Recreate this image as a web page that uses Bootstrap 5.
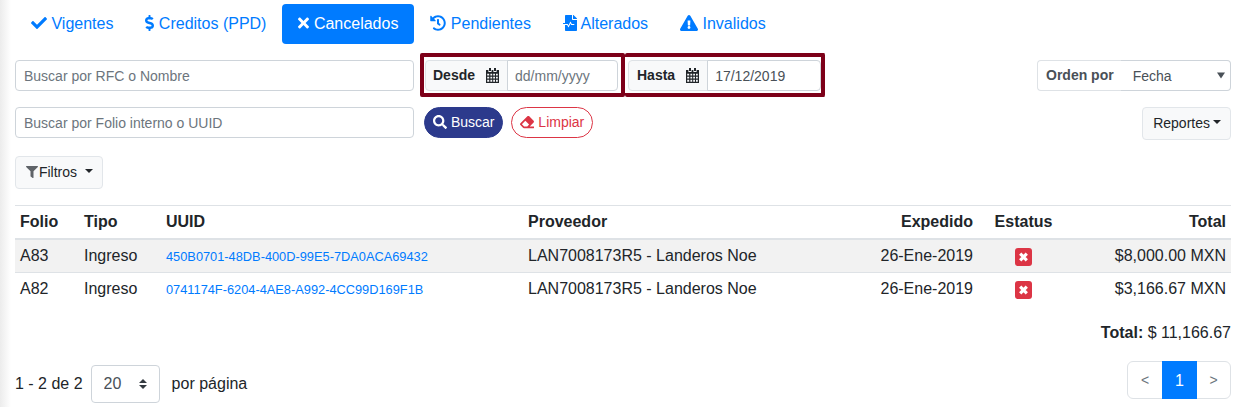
<!DOCTYPE html>
<html lang="es">
<head>
    <meta charset="UTF-8">
    <meta name="viewport" content="width=device-width, initial-scale=1.0">
    <title>Comprobantes cancelados</title>
    <link href="https://cdn.jsdelivr.net/npm/bootstrap@5.3.0/dist/css/bootstrap.min.css" rel="stylesheet">
    <style>
        html, body {
            height: 407px;
            overflow: hidden;
        }
        body {
            font-family: "Liberation Sans", Arial, sans-serif;
            color: #212529;
            background: linear-gradient(to right, #ececec 0, #ffffff 11px) no-repeat;
        }
        .page-wrap {
            padding: 4px 7px 0 15px;
        }
        .ic {
            height: 1em;
            fill: currentColor;
            vertical-align: -.125em;
        }
        /* pestañas */
        .nav-pills .nav-link {
            color: #007bff;
            border-radius: 4px;
        }
        .nav-pills .nav-link.active {
            background-color: #007bff;
            color: #fff;
        }
        /* filtros */
        .row-one {
            margin-top: 9px;
            height: 44px;
        }
        .row-two {
            margin-top: 10px;
        }
        .search-box {
            width: 399px;
            height: 31px;
        }
        .row-one .search-box, .order-box .form-select {
            padding-top: 5px;
            padding-bottom: 3px;
        }
        .form-control, .form-select {
            border-color: #ced4da;
            color: #495057;
            border-radius: 4px;
        }
        .form-control::placeholder {
            color: #6c757d;
        }
        .date-box {
            border: 4px solid #7d0019;
            border-radius: 2px;
            padding: 3px 3px 2px 1px;
            width: 205px;
            margin-left: 6px;
        }
        .date-box.second {
            border-left: 0;
            margin-left: 0;
            width: 200px;
            padding-left: 3px;
            padding-right: 0;
        }
        .date-box .input-group-text, .order-box .input-group-text {
            font-weight: 700;
            font-size: 14px;
            background-color: #f8f9fa;
            padding: 0 8px;
            height: 31px;
        }
        .date-box .input-group-text {
            padding-left: 7px;
        }
        .date-box.second .input-group-text {
            padding-left: 8px;
        }
        .date-box .form-control {
            height: 31px;
            padding-left: 7px;
        }
        .cal-ic {
            width: 13px;
            height: 15px;
            margin-left: 11px;
            color: #212529;
        }
        .order-box {
            width: 194px;
            height: 31px;
        }
        .order-box .input-group-text {
            background: #fff;
            color: #495057;
            border-right: 0;
        }
        .order-box .form-select {
            border-left: 0;
            height: 31px;
            padding-left: 12px;
            background-image: url("data:image/svg+xml,%3csvg xmlns='http://www.w3.org/2000/svg' viewBox='0 0 8 6'%3e%3cpath fill='%23495057' d='M0 0h8L4 6z'/%3e%3c/svg%3e");
            background-size: 8px 7px;
            background-position: right 5px center;
        }
        .btn-search {
            background-color: #2c3a8c;
            border-color: #2c3a8c;
            color: #fff;
            height: 31px;
            padding: 4px 8px;
            margin-left: 10px;
        }
        .btn-clear {
            height: 31px;
            padding: 4px 8px;
            margin-left: 8px;
            background: #fff;
            color: #dc3545;
            border-color: #dc3545;
        }
        .btn-plain {
            background-color: #f8f9fa;
            border-color: #e2e6ea;
            color: #212529;
            height: 33px;
            padding: 5px 9px 5px 10px;
            font-size: 14px;
            border-radius: 4px;
        }
        .btn-plain.dropdown-toggle::after {
            margin-left: 3px;
        }
        .filter-wrap {
            margin-top: 16px;
        }
        .filter-ic {
            height: 12px;
            margin-right: -3px;
            vertical-align: -1px;
            color: #5f6368;
        }
        .btn-plain.toggle-wide::after {
            margin-left: 8px;
        }
        /* tabla */
        .doc-table {
            table-layout: fixed;
            margin: 16px 0 0;
            border-top: 1px solid #dee2e6;
        }
        .doc-table th, .doc-table td {
            padding: 4px 5px;
            border-bottom: 1px solid #dee2e6;
            vertical-align: middle;
        }
        .doc-table thead th {
            border-bottom: 2px solid #dee2e6;
        }
        .doc-table tbody tr:last-child td {
            border-bottom: 0;
        }
        .doc-table td a {
            color: #007bff;
            font-size: 12.8px;
            text-decoration: none;
        }
        .col-folio { width: 64px; }
        .col-tipo { width: 82px; }
        .col-uuid { width: 362px; }
        .col-prov { width: 337px; }
        .col-exp { width: 118px; }
        .col-est { width: 91px; }
        .status-ic {
            width: 17px;
            height: 18px;
            vertical-align: -5px;
        }
        .status-ic rect {
            fill: #dc3545;
        }
        .status-ic path {
            stroke: #fff;
            stroke-width: 3.2;
            fill: none;
        }
        .grand-total {
            margin-top: 16px;
            line-height: 24px;
        }
        /* pie */
        .foot-row {
            margin-top: 16px;
        }
        .per-page {
            margin-top: 4px;
        }
        .per-page .form-select {
            width: 69px;
            height: 38px;
            padding-left: 12px;
            margin: 0 12px 0 8px;
            background-image: url("data:image/svg+xml,%3csvg xmlns='http://www.w3.org/2000/svg' viewBox='0 0 4 5'%3e%3cpath fill='%23343a40' d='M2 0L0 2h4zm0 5L0 3h4z'/%3e%3c/svg%3e");
            background-size: 8px 10px;
            background-position: right 12px center;
        }
        .pagination .page-link {
            width: 35px;
            height: 38px;
            padding: 7px 0;
            text-align: center;
            color: #6c757d;
            border-color: #dee2e6;
        }
        .pagination .page-item:first-child .page-link {
            width: 36px;
        }
        .pagination .active .page-link {
            background-color: #007bff;
            border-color: #007bff;
            color: #fff;
        }
        .pagination .arrow-link {
            font-size: 14px;
            padding-top: 8px;
        }
    </style>
</head>
<body>
    <div class="page-wrap">
        <ul class="nav nav-pills">
            <li class="nav-item">
                <a class="nav-link" href="#"><svg class="ic" viewBox="0 0 512 512"><path d="M173.898 439.404l-166.4-166.4c-9.997-9.997-9.997-26.206 0-36.204l36.203-36.204c9.997-9.998 26.207-9.998 36.204 0L192 312.69 432.095 72.596c9.997-9.997 26.207-9.997 36.204 0l36.203 36.204c9.997 9.997 9.997 26.206 0 36.204l-294.4 294.401c-9.998 9.997-26.207 9.997-36.204-.001z"/></svg> Vigentes</a>
            </li>
            <li class="nav-item">
                <a class="nav-link" href="#"><svg class="ic" viewBox="0 0 288 512"><path d="M209.2 233.4l-108-31.6C88.7 198.2 80 186.5 80 173.5c0-16.3 13.2-29.5 29.5-29.5h66.3c12.2 0 24.2 3.7 34.2 10.5 6.1 4.1 14.3 3.1 19.5-2l34.8-34c7.1-6.9 6.1-18.4-1.8-24.5C238 74.8 207.4 64.1 176 64V16c0-8.8-7.2-16-16-16h-32c-8.8 0-16 7.2-16 16v48h-2.5C45.8 64-5.4 118.7.5 183.6c4.2 46.1 39.4 83.6 83.8 96.6l102.5 30c12.5 3.7 21.2 15.3 21.2 28.3 0 16.3-13.2 29.5-29.5 29.5h-66.3C100 368 88 364.3 78 357.5c-6.1-4.1-14.3-3.1-19.5 2l-34.8 34c-7.1 6.9-6.1 18.4 1.8 24.5 24.5 19.2 55.1 29.9 86.5 30v48c0 8.8 7.2 16 16 16h32c8.8 0 16-7.2 16-16v-48.2c46.6-.9 90.3-28.6 105.7-72.7 21.5-61.6-14.6-124.8-72.5-141.7z"/></svg> Creditos (PPD)</a>
            </li>
            <li class="nav-item">
                <a class="nav-link active" href="#"><svg class="ic" viewBox="0 0 352 512"><path d="M242.72 256l100.07-100.07c12.28-12.28 12.28-32.19 0-44.48l-22.24-22.24c-12.28-12.28-32.19-12.28-44.48 0L176 189.28 75.93 89.21c-12.28-12.28-32.19-12.28-44.48 0L9.21 111.45c-12.28 12.28-12.28 32.19 0 44.48L109.28 256 9.21 356.07c-12.28 12.28-12.28 32.19 0 44.48l22.24 22.24c12.28 12.28 32.2 12.28 44.48 0L176 322.72l100.07 100.07c12.28 12.28 32.2 12.28 44.48 0l22.24-22.24c12.28-12.28 12.28-32.19 0-44.48L242.72 256z"/></svg> Cancelados</a>
            </li>
            <li class="nav-item">
                <a class="nav-link" href="#"><svg class="ic" viewBox="0 0 512 512"><path d="M504 255.531c.253 136.64-111.18 248.372-247.82 248.468-59.015.042-113.223-20.53-155.822-54.911-11.077-8.94-11.905-25.541-1.839-35.607l11.267-11.267c8.609-8.609 22.353-9.551 31.891-1.984C173.062 425.135 212.781 440 256 440c101.705 0 184-82.311 184-184 0-101.705-82.311-184-184-184-48.814 0-93.149 18.969-126.068 49.932l50.754 50.754c10.08 10.08 2.941 27.314-11.313 27.314H24c-8.837 0-16-7.163-16-16V38.627c0-14.254 17.234-21.393 27.314-11.314l49.372 49.372C129.209 34.136 189.552 8 256 8c136.81 0 247.747 110.78 248 247.531zm-180.912 78.784l9.823-12.63c8.138-10.463 6.253-25.542-4.21-33.679L288 256.349V152c0-13.255-10.745-24-24-24h-16c-13.255 0-24 10.745-24 24v135.651l65.409 50.874c10.463 8.137 25.541 6.253 33.679-4.21z"/></svg> Pendientes</a>
            </li>
            <li class="nav-item">
                <a class="nav-link" href="#"><svg class="ic" viewBox="0 0 448 512"><path d="M288 136V0H88C74.7 0 64 10.7 64 24v232H8c-4.4 0-8 3.6-8 8v16c0 4.4 3.6 8 8 8h140.9c3 0 5.8 1.7 7.2 4.4l19.9 39.8 56.8-113.7c2.9-5.9 11.4-5.9 14.3 0l34.7 69.5H352c8.8 0 16 7.2 16 16s-7.2 16-16 16h-89.9L240 275.8l-56.8 113.7c-2.9 5.9-11.4 5.9-14.3 0L134.1 320H64v168c0 13.3 10.7 24 24 24h336c13.3 0 24-10.7 24-24V160H312c-13.2 0-24-10.8-24-24zm153-31L343.1 7c-4.5-4.5-10.6-7-17-7H320v128h128v-6.1c0-6.3-2.5-12.4-7-16.9z"/></svg> Alterados</a>
            </li>
            <li class="nav-item">
                <a class="nav-link" href="#"><svg class="ic" viewBox="0 0 576 512"><path d="M569.517 440.013C587.975 472.007 564.806 512 527.94 512H48.054c-36.937 0-59.999-40.055-41.577-71.987L246.423 23.985c18.467-32.009 64.72-31.951 83.154 0l239.94 416.028zM288 354c-25.405 0-46 20.595-46 46s20.595 46 46 46 46-20.595 46-46-20.595-46-46-46zm-43.673-165.346l7.418 136c.347 6.364 5.609 11.346 11.982 11.346h48.546c6.373 0 11.635-4.982 11.982-11.346l7.418-136c.375-6.874-5.098-12.654-11.982-12.654h-63.383c-6.884 0-12.356 5.78-11.981 12.654z"/></svg> Invalidos</a>
            </li>
        </ul>

        <div class="d-flex align-items-center row-one">
            <input type="text" class="form-control form-control-sm search-box" placeholder="Buscar por RFC o Nombre">
            <div class="date-box">
                <div class="input-group input-group-sm flex-nowrap">
                    <span class="input-group-text">Desde<svg class="ic cal-ic" viewBox="0 0 13 15"><path fill-rule="evenodd" d="M3 0h2v3H3zM8 0h2v3H8zM0 2h2.4v2h3.2V2h1.8v2h3.2V2H13v13H0zM1.2 5.7v1.8h2v-1.8zm3.2 0v1.8h1.8v-1.8zm2.8 0v1.8H9v-1.8zm2.8 0v1.8h1.8v-1.8zM1.2 8.7v1.8h2V8.7zm3.2 0v1.8h1.8V8.7zm2.8 0v1.8H9V8.7zm2.8 0v1.8h1.8V8.7zM1.2 11.7v2h2v-2zm3.2 0v2h1.8v-2zm2.8 0v2H9v-2zm2.8 0v2h1.8v-2z"/></svg></span>
                    <input type="text" class="form-control form-control-sm" placeholder="dd/mm/yyyy">
                </div>
            </div>
            <div class="date-box second">
                <div class="input-group input-group-sm flex-nowrap">
                    <span class="input-group-text">Hasta<svg class="ic cal-ic" viewBox="0 0 13 15"><path fill-rule="evenodd" d="M3 0h2v3H3zM8 0h2v3H8zM0 2h2.4v2h3.2V2h1.8v2h3.2V2H13v13H0zM1.2 5.7v1.8h2v-1.8zm3.2 0v1.8h1.8v-1.8zm2.8 0v1.8H9v-1.8zm2.8 0v1.8h1.8v-1.8zM1.2 8.7v1.8h2V8.7zm3.2 0v1.8h1.8V8.7zm2.8 0v1.8H9V8.7zm2.8 0v1.8h1.8V8.7zM1.2 11.7v2h2v-2zm3.2 0v2h1.8v-2zm2.8 0v2H9v-2zm2.8 0v2h1.8v-2z"/></svg></span>
                    <input type="text" class="form-control form-control-sm" value="17/12/2019">
                </div>
            </div>
            <div class="input-group input-group-sm flex-nowrap ms-auto order-box">
                <span class="input-group-text">Orden por</span>
                <select class="form-select form-select-sm">
                    <option>Fecha</option>
                    <option>Folio</option>
                    <option>Total</option>
                </select>
            </div>
        </div>

        <div class="d-flex align-items-start row-two">
            <input type="text" class="form-control form-control-sm search-box" placeholder="Buscar por Folio interno o UUID">
            <button type="button" class="btn btn-sm rounded-pill btn-search"><svg class="ic" viewBox="0 0 512 512"><path d="M505 442.7L405.3 343c-4.5-4.5-10.6-7-17-7H372c27.6-35.3 44-79.7 44-128C416 93.1 322.9 0 208 0S0 93.1 0 208s93.1 208 208 208c48.3 0 92.7-16.4 128-44v16.3c0 6.4 2.5 12.5 7 17l99.7 99.7c9.4 9.4 24.6 9.4 33.9 0l28.3-28.3c9.4-9.4 9.4-24.6.1-34zM208 336c-70.7 0-128-57.2-128-128 0-70.7 57.2-128 128-128 70.7 0 128 57.2 128 128 0 70.7-57.2 128-128 128z"/></svg> Buscar</button>
            <button type="button" class="btn btn-sm rounded-pill btn-clear"><svg class="ic" viewBox="0 0 512 512"><path d="M497.941 273.941c18.745-18.745 18.745-49.137 0-67.882l-160-160c-18.745-18.745-49.137-18.745-67.882 0l-256 256c-18.745 18.745-18.745 49.137 0 67.882l96 96A48.004 48.004 0 0 0 144 480h356c6.627 0 12-5.373 12-12v-40c0-6.627-5.373-12-12-12H355.883l142.058-142.059zm-302.627-62.627l137.373 137.373L265.373 416H150.628l-80-80 124.686-124.686z"/></svg> Limpiar</button>
            <button type="button" class="btn btn-plain dropdown-toggle ms-auto">Reportes</button>
        </div>

        <div class="filter-wrap">
            <button type="button" class="btn btn-plain dropdown-toggle toggle-wide"><svg class="ic filter-ic" viewBox="0 0 512 512"><path d="M487.976 0H24.028C2.71 0-8.047 25.866 7.058 40.971L192 225.941V432c0 7.831 3.821 15.17 10.237 19.662l80 55.98C298.02 518.69 320 507.493 320 487.98V225.941l184.947-184.97C520.021 25.896 509.338 0 487.976 0z"/></svg> Filtros</button>
        </div>

        <table class="table table-striped doc-table">
            <colgroup>
                <col class="col-folio"><col class="col-tipo"><col class="col-uuid"><col class="col-prov"><col class="col-exp"><col class="col-est"><col>
            </colgroup>
            <thead>
                <tr>
                    <th>Folio</th>
                    <th>Tipo</th>
                    <th>UUID</th>
                    <th>Proveedor</th>
                    <th class="text-end">Expedido</th>
                    <th class="text-center">Estatus</th>
                    <th class="text-end">Total</th>
                </tr>
            </thead>
            <tbody>
                <tr>
                    <td>A83</td>
                    <td>Ingreso</td>
                    <td><a href="#">450B0701-48DB-400D-99E5-7DA0ACA69432</a></td>
                    <td>LAN7008173R5 - Landeros Noe</td>
                    <td class="text-end">26-Ene-2019</td>
                    <td class="text-center"><svg class="status-ic" viewBox="0 0 17 18"><rect width="17" height="18" rx="3"/><path d="M5.2 5.7l6.6 6.6M11.8 5.7l-6.6 6.6"/></svg></td>
                    <td class="text-end">$8,000.00 MXN</td>
                </tr>
                <tr>
                    <td>A82</td>
                    <td>Ingreso</td>
                    <td><a href="#">0741174F-6204-4AE8-A992-4CC99D169F1B</a></td>
                    <td>LAN7008173R5 - Landeros Noe</td>
                    <td class="text-end">26-Ene-2019</td>
                    <td class="text-center"><svg class="status-ic" viewBox="0 0 17 18"><rect width="17" height="18" rx="3"/><path d="M5.2 5.7l6.6 6.6M11.8 5.7l-6.6 6.6"/></svg></td>
                    <td class="text-end">$3,166.67 MXN</td>
                </tr>
            </tbody>
        </table>

        <div class="text-end grand-total"><strong>Total:</strong> $ 11,166.67</div>

        <div class="d-flex justify-content-between align-items-start foot-row">
            <div class="d-flex align-items-center per-page">
                <span>1 - 2 de 2</span>
                <select class="form-select">
                    <option>20</option>
                    <option>50</option>
                    <option>100</option>
                </select>
                <span>por página</span>
            </div>
            <ul class="pagination mb-0">
                <li class="page-item"><a class="page-link arrow-link" href="#">&lt;</a></li>
                <li class="page-item active"><a class="page-link" href="#">1</a></li>
                <li class="page-item"><a class="page-link arrow-link" href="#">&gt;</a></li>
            </ul>
        </div>
    </div>

    <script src="https://cdn.jsdelivr.net/npm/bootstrap@5.3.0/dist/js/bootstrap.bundle.min.js"></script>
</body>
</html>
